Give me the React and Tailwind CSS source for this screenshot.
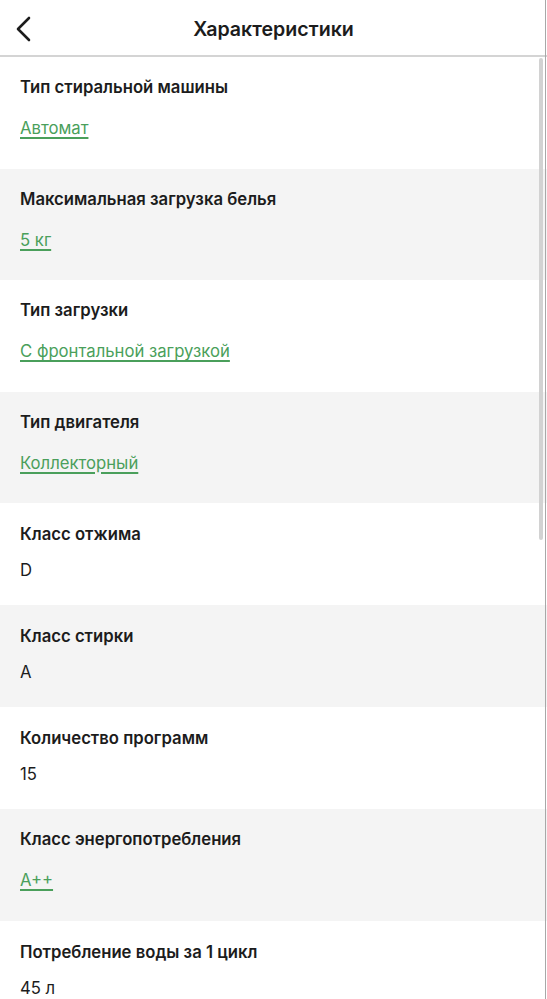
import React from 'react';

const SPECS = [
  { title: 'Тип стиральной машины', value: 'Автомат', link: true },
  { title: 'Максимальная загрузка белья', value: '5 кг', link: true },
  { title: 'Тип загрузки', value: 'С фронтальной загрузкой', link: true },
  { title: 'Тип двигателя', value: 'Коллекторный', link: true },
  { title: 'Класс отжима', value: 'D' },
  { title: 'Класс стирки', value: 'A' },
  { title: 'Количество программ', value: '15' },
  { title: 'Класс энергопотребления', value: 'A++', link: true },
  { title: 'Потребление воды за 1 цикл', value: '45 л' },
];

export default function App() {
  return (
    <div className="relative w-full h-[999px] overflow-hidden bg-white font-['Inter',sans-serif] text-[#1c1c1c]">
      <header className="relative h-[57px] flex items-center justify-center border-b-2 border-[#d4d4d4]">
        <button className="absolute left-[14px] top-[15px] p-0">
          <svg width="20" height="28" viewBox="0 0 20 28" fill="none">
            <path d="M15 3 L4 14 L15 25" stroke="#1c1c1c" strokeWidth="2.6" strokeLinecap="round" strokeLinejoin="round" />
          </svg>
        </button>
        <h1 className="text-[19.6px] font-semibold pt-[4px]">Характеристики</h1>
      </header>

      <div className="flex flex-col">
        {SPECS.map((spec, i) => (
          <div
            key={spec.title}
            className={`shrink-0 flex flex-col px-5 ${spec.link ? 'h-[111.5px] pt-[19px] gap-[19px]' : 'h-[102px] pt-[20px] gap-[14px]'} ${i % 2 ? 'bg-[#f4f4f4]' : 'bg-white'}`}
          >
            <div className="text-[16.7px] font-semibold leading-[22px]">{spec.title}</div>
            {spec.link ? (
              <a className="text-[16.7px] leading-[22px] text-[#4a9f5b] underline underline-offset-[3px] decoration-[1.5px] w-fit">
                {spec.value}
              </a>
            ) : (
              <div className="text-[16.7px] leading-[22px]">{spec.value}</div>
            )}
          </div>
        ))}
      </div>

      {/* scrollbar overlay */}
      <div className="absolute right-[4px] top-[58px] w-[4px] h-[482px] rounded-full bg-[#d2d2d2]" />
      <div className="absolute right-[1px] top-0 w-px h-full bg-[#a8a8a8]" />
    </div>
  );
}
